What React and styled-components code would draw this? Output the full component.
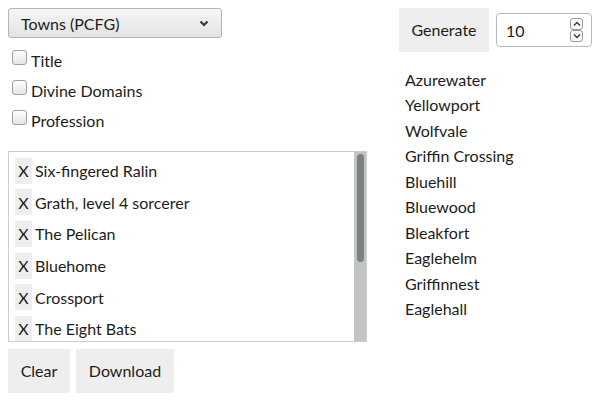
import React, { useState } from "react";
import styled, { createGlobalStyle } from "styled-components";

const GlobalStyle = createGlobalStyle`
    body {
        margin: 8px;
        font-family: Lato, "Liberation Sans", sans-serif;
        font-size: 16px;
        color: #1c1c1c;
        background: #fff;
    }
`;

const saved = [
    "Six-fingered Ralin",
    "Grath, level 4 sorcerer",
    "The Pelican",
    "Bluehome",
    "Crossport",
    "The Eight Bats",
    "Wolfhill",
    "Brother Osric",
    "Redmarsh",
    "The Copper Kettle",
];

const generated = [
    "Azurewater",
    "Yellowport",
    "Wolfvale",
    "Griffin Crossing",
    "Bluehill",
    "Bluewood",
    "Bleakfort",
    "Eaglehelm",
    "Griffinnest",
    "Eaglehall",
];

const Chevron = ({ up }) => (
    <svg width="8" height="6" viewBox="0 0 8 6">
        <path
            d={up ? "M1 4.5 L4 1.5 L7 4.5" : "M1 1.5 L4 4.5 L7 1.5"}
            fill="none"
            stroke="#333"
            strokeWidth="1.3"
        />
    </svg>
);

const App = () => {
    const [count, setCount] = useState(10);

    return (
        <Page>
            <GlobalStyle />
            <LeftColumn>
                <Select>
                    <span>Towns (PCFG)</span>
                    <svg width="10" height="7" viewBox="0 0 10 7">
                        <path d="M1.5 1.5 L5 5 L8.5 1.5" fill="none" stroke="#333" strokeWidth="2" />
                    </svg>
                </Select>
                <Options>
                    {["Title", "Divine Domains", "Profession"].map((label) => (
                        <OptionRow key={label}>
                            <Checkbox type="checkbox" />
                            {label}
                        </OptionRow>
                    ))}
                </Options>
                <ListFrame>
                    <SavedList>
                        {saved.map((name) => (
                            <SavedItem key={name}>
                                <RemoveButton>X</RemoveButton>
                                <span>{name}</span>
                            </SavedItem>
                        ))}
                    </SavedList>
                    <ScrollTrack>
                        <ScrollThumb />
                    </ScrollTrack>
                </ListFrame>
                <ButtonRow>
                    <Button $width="62px">Clear</Button>
                    <Button $width="98px">Download</Button>
                </ButtonRow>
            </LeftColumn>
            <RightColumn>
                <Controls>
                    <Button $width="90px">Generate</Button>
                    <NumberBox>
                        <NumberInput
                            value={count}
                            onChange={(e) => setCount(e.target.value)}
                        />
                        <Spinner>
                            <SpinButton onClick={() => setCount(Number(count) + 1)}>
                                <Chevron up />
                            </SpinButton>
                            <SpinButton onClick={() => setCount(Number(count) - 1)}>
                                <Chevron />
                            </SpinButton>
                        </Spinner>
                    </NumberBox>
                </Controls>
                <Results>
                    {generated.map((name) => (
                        <li key={name}>{name}</li>
                    ))}
                </Results>
            </RightColumn>
        </Page>
    );
};

export default App;

const Page = styled.div`
    display: flex;
    gap: 32px;
    align-items: flex-start;
`;

const LeftColumn = styled.div`
    width: 359px;
    display: flex;
    flex-direction: column;
`;

const RightColumn = styled.div`
    display: flex;
    flex-direction: column;
`;

const Select = styled.div`
    box-sizing: border-box;
    width: 214px;
    height: 30px;
    padding: 0 12px 0 12px;
    display: flex;
    align-items: center;
    justify-content: space-between;
    border: 1px solid #b4b4b4;
    border-radius: 3px;
    background: linear-gradient(#f6f6f6, #e3e3e3);
`;

const Options = styled.div`
    margin-top: 7px;
    display: flex;
    flex-direction: column;
`;

const OptionRow = styled.label`
    height: 30px;
    display: flex;
    align-items: center;
`;

const Checkbox = styled.input`
    appearance: none;
    box-sizing: border-box;
    width: 15px;
    height: 15px;
    margin: 0 4px 5px 4px;
    border: 1px solid #a0a0a0;
    border-radius: 3px;
    background: linear-gradient(#ffffff, #e4e4e4);
`;

const ListFrame = styled.div`
    box-sizing: border-box;
    margin-top: 16px;
    height: 191px;
    display: flex;
    border: 1px solid #cdcdcd;
`;

const SavedList = styled.div`
    flex: 1;
    overflow: hidden;
    padding: 3px 6px 0 6px;
`;

const ScrollTrack = styled.div`
    width: 12px;
    box-sizing: border-box;
    padding: 2px 2.5px;
    background: #c3c5c5;
`;

const ScrollThumb = styled.div`
    height: 108px;
    border-radius: 4px;
    background: #7b8080;
`;

const SavedItem = styled.div`
    height: 31.6px;
    display: flex;
    align-items: center;
    gap: 3px;
`;

const RemoveButton = styled.button`
    width: 17px;
    height: 26px;
    padding: 0;
    border: none;
    background: #eeeeee;
    font-family: inherit;
    font-size: 16px;
    color: #1c1c1c;
`;

const ButtonRow = styled.div`
    margin-top: 7px;
    display: flex;
    gap: 6px;
`;

const Button = styled.button`
    width: ${(p) => p.$width};
    height: 44px;
    padding: 0 0 2px 0;
    border: none;
    background: #eeeeee;
    font-family: inherit;
    font-size: 16px;
    color: #1c1c1c;
`;

const Controls = styled.div`
    display: flex;
    align-items: center;
    gap: 7px;
`;

const NumberBox = styled.div`
    box-sizing: border-box;
    width: 96px;
    height: 34px;
    padding: 0 8px 0 9px;
    display: flex;
    align-items: center;
    border: 1px solid #b8b8b8;
    border-radius: 4px;
`;

const NumberInput = styled.input`
    flex: 1;
    min-width: 0;
    border: none;
    outline: none;
    padding: 0;
    font-family: inherit;
    font-size: 16px;
    color: #1c1c1c;
`;

const Spinner = styled.div`
    display: flex;
    flex-direction: column;
`;

const SpinButton = styled.div`
    box-sizing: border-box;
    width: 13px;
    height: 12px;
    display: flex;
    align-items: center;
    justify-content: center;
    border: 1px solid #9a9a9a;
    border-radius: 3px;
    background: #fafafa;
`;

const Results = styled.ul`
    list-style: none;
    margin: 15px 0 0 0;
    padding: 0 0 0 6px;
    line-height: 25.45px;
`;
